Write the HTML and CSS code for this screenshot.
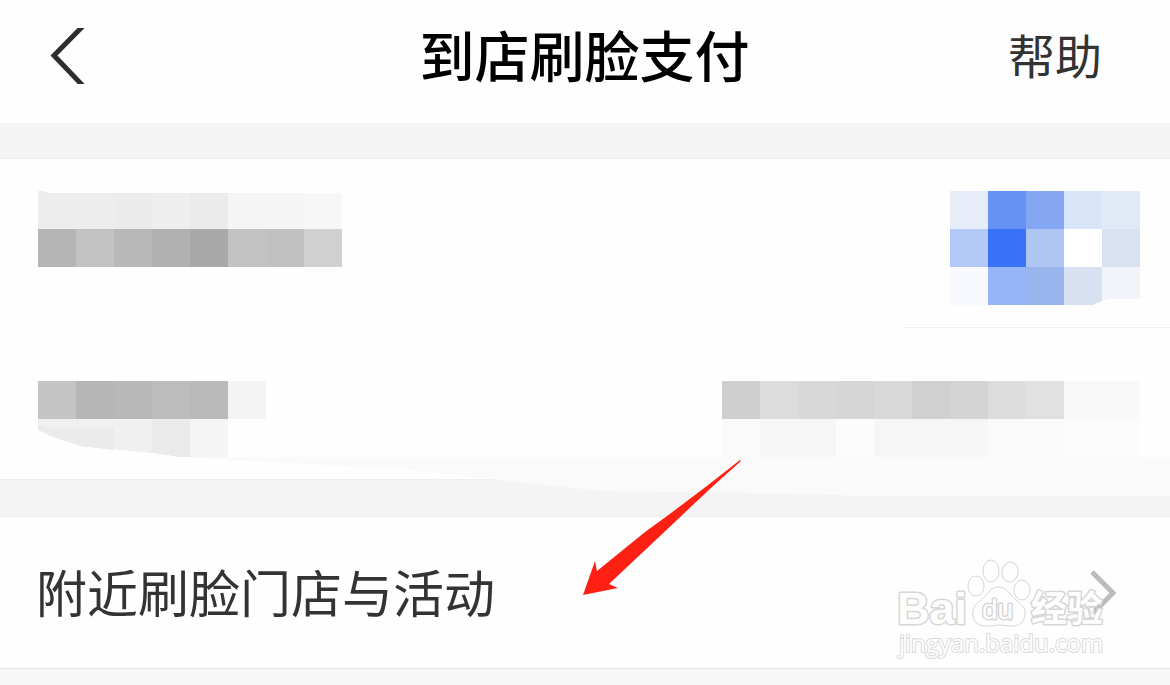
FILE: index.html
```html
<!DOCTYPE html>
<html lang="zh-CN">
<head>
<meta charset="utf-8">
<meta name="viewport" content="width=device-width, initial-scale=1">
<title>到店刷脸支付</title>
<link rel="stylesheet" href="styles.css">
</head>
<body>
<header class="nav">
  <button class="back" type="button" aria-label="返回">
    <svg width="36" height="56" viewBox="0 0 36 56"><path d="M36-4 5 27.500 36 60" fill="none" stroke="#2d2d30" stroke-width="5"/></svg>
  </button>
  <h1 class="title">到店刷脸支付</h1>
  <a class="help" href="#">帮助</a>
</header>
<div class="gap"></div>
<main>
  <section class="account">
    <div class="account-row">
      <svg class="mosaic" width="304" height="76" viewBox="0 0 304 76" shape-rendering="crispEdges">
        <path d="M0 0H5L12 2H76V38H0z" fill="#ededed"/>
        <path d="M76 2h38v36H76z" fill="#ebebeb"/><path d="M114 2h38v36h-38z" fill="#eee"/><path d="M152 2h38v36h-38z" fill="#ebebeb"/>
        <path d="M190 2h76v36h-76z" fill="#f5f5f5"/><path d="M266 2h38v36h-38z" fill="#f7f7f7"/>
        <path d="M0 38h38v38H0z" fill="#b5b5b5"/><path d="M38 38h38v38H38z" fill="#c3c3c3"/><path d="M76 38h38v38H76z" fill="#b8b8b8"/><path d="M114 38h38v38h-38z" fill="#b1b1b1"/><path d="M152 38h38v38h-38z" fill="#a9a9a9"/><path d="M190 38h38v38h-38z" fill="#c3c3c3"/><path d="M228 38h38v38h-38z" fill="#c1c1c1"/><path d="M266 38h38v38h-38z" fill="#d0d0d0"/>
      </svg>
      <svg class="mosaic" width="190" height="114" viewBox="0 0 190 114" shape-rendering="crispEdges">
        <path d="M0 0h38v38H0z" fill="#e6edf9"/><path d="M38 0h38v38H38z" fill="#6592f4"/><path d="M76 0h38v38H76z" fill="#85a7f3"/><path d="M114 0h38v38h-38z" fill="#d8e4f7"/><path d="M152 0h38v38h-38z" fill="#e3eaf7"/>
        <path d="M0 38h38v38H0z" fill="#b2c9f8"/><path d="M38 38h38v38H38z" fill="#3772f7"/><path d="M76 38h38v38H76z" fill="#afc6f3"/><path d="M114 38h38v38h-38z" fill="#fff"/><path d="M152 38h38v38h-38z" fill="#d9e2f3"/>
        <path d="M0 76h38v38H0z" fill="#f7f9fe"/><path d="M38 76h38v38H38z" fill="#96b4f7"/><path d="M76 76h38v38H76z" fill="#9ab5ee"/><path d="M114 76h38v34l-9 4h-29z" fill="#d7e1f1"/><path d="M152 76h38v32h-32l-6 3z" fill="#f2f4fa"/>
      </svg>
    </div>
    <div class="divider"></div>
    <div class="account-row account-row-low">
      <svg class="mosaic" width="228" height="76" viewBox="0 0 228 76" shape-rendering="crispEdges">
        <path d="M0 0h38v38H0z" fill="#c5c5c5"/><path d="M38 0h38v38H38z" fill="#b6b6b6"/><path d="M76 0h38v38H76z" fill="#b8b8b8"/><path d="M114 0h38v38h-38z" fill="#bdbdbd"/><path d="M152 0h38v38h-38z" fill="#bababa"/><path d="M190 0h38v38h-38z" fill="#f4f4f4"/>
        <path d="M0 38h114v34L42 65 10 54 0 49z" fill="#f0f0f0"/><path d="M0 44 10 47H76V69L42 65 10 54 0 49z" fill="#ebebeb"/><path d="M114 38h38v38h-10l-28-4z" fill="#eaeaea"/><path d="M152 38h38v38h-38z" fill="#f5f5f5"/>
      </svg>
      <svg class="mosaic" width="418" height="76" viewBox="0 0 418 76" shape-rendering="crispEdges">
        <path d="M0 0h38v38H0z" fill="#cfcfcf"/><path d="M38 0h38v38H38z" fill="#dcdcdc"/><path d="M76 0h38v38H76z" fill="#d8d8d8"/><path d="M114 0h38v38h-38z" fill="#d5d5d5"/><path d="M152 0h38v38h-38z" fill="#d9d9d9"/><path d="M190 0h38v38h-38z" fill="#d0d0d0"/><path d="M228 0h38v38h-38z" fill="#d4d4d4"/><path d="M266 0h38v38h-38z" fill="#dcdcdc"/><path d="M304 0h38v38h-38z" fill="#e1e1e1"/><path d="M342 0h76v38h-76z" fill="#f9f9f9"/>
        <path d="M0 38h342v38H0z" fill="#fafafa"/><path d="M38 38h76v38H38zM152 38h114v38H152z" fill="#f6f6f6"/><path d="M114 38h38v38h-38zM342 38h76v38h-76z" fill="#fcfcfc"/>
      </svg>
    </div>
    <svg class="smudge" viewBox="0 0 1170 39" preserveAspectRatio="none" aria-hidden="true"><path d="M180 0H1170V39H870L760 36 600 34 500 23 400 12 300 7z" fill="#fafafa"/></svg>
  </section>
  <div class="gap gap-mid"></div>
  <a class="entry" href="#">
    <span class="entry-label">附近刷脸门店与活动</span>
    <svg width="26" height="46" viewBox="0 0 26 46"><path d="M2 2 23 23 2 44" fill="none" stroke="#bcbcbc" stroke-width="5"/></svg>
  </a>
  <div class="gap gap-last"></div>
</main>
<svg class="arrow" width="160" height="138" viewBox="0 0 160 138" aria-hidden="true"><path d="M159 1Q114 37 64 73L16 112 14 102 2 136 37 129 28 125 95 62Q128 30 160 2z" fill="#ff2014"/></svg>
<svg class="watermark" width="220" height="110" viewBox="0 0 220 110" role="img" aria-label="Baidu 经验">
  <text class="wm-latin" x="7" y="69">Bai</text>
  <ellipse cx="86" cy="31" rx="8" ry="10"/><ellipse cx="101" cy="16" rx="8" ry="11"/><ellipse cx="120" cy="17" rx="8" ry="10" transform="rotate(10 120 17)"/><ellipse cx="132" cy="35" rx="8" ry="10"/>
  <path d="M108 32C100 32 97 41 90 46C84 50 82 55 83 61C84 69 90 71 97 71C102 71 105 70 109 70C113 70 116 71 121 71C129 71 134 68 135 60C136 53 131 49 126 45C120 40 117 32 108 32z"/>
  <text class="wm-du" x="92" y="64">du</text>
  <text class="wm-cjk" x="141" y="67">经验</text>
  <text class="wm-url" x="9" y="97">jingyan.baidu.com</text>
</svg>
</body>
</html>
```
FILE: styles.css
```css
* { box-sizing: border-box; }
body {
  margin: 0;
  position: relative;
  min-height: 100vh;
  overflow: hidden;
  background: #f6f6f6;
  color: #333;
  font-family: "Noto Sans CJK SC", sans-serif;
}
svg { display: block; flex: none; }
a { color: inherit; text-decoration: none; }
.nav {
  display: grid;
  grid-template-columns: 1fr auto 1fr;
  align-items: center;
  height: 123px;
  padding: 0 50px 11px 49px;
  background: #fefefe;
}
.back {
  justify-self: start;
  padding: 0;
  border: 0;
  background: none;
}
.title {
  margin: 0;
  padding-bottom: 6px;
  color: #000;
  font-size: 55px;
  font-weight: 500;
  line-height: 80px;
}
.help {
  justify-self: end;
  padding: 0 18px 4px 0;
  font-size: 47px;
  line-height: 80px;
}
.gap {
  height: 36px;
  background: #f4f4f4;
  border-bottom: 1px solid #ececec;
}
.gap-mid {
  height: 38px;
  border-top: 1px solid #eee;
}
.gap-last {
  height: 17px;
  border-top: 1px solid #e6e6e6;
  border-bottom: 0;
  background: #f6f6f6;
}
.account {
  position: relative;
  background: #fefefe;
}
.account-row {
  display: flex;
  justify-content: space-between;
  align-items: flex-start;
  padding: 32px 30px 22px 38px;
}
.account-row-low { padding-top: 53px; }
.divider {
  width: 266px;
  height: 1px;
  margin-left: auto;
  background: #f0f0f0;
}
.smudge {
  position: absolute;
  top: 298px;
  left: 0;
  width: 100%;
  height: 39px;
}
.entry {
  display: flex;
  justify-content: space-between;
  align-items: center;
  height: 151px;
  padding: 0 54px 0 36px;
  background: #fefefe;
  font-size: 51px;
  line-height: 76px;
}
.entry-label { padding-bottom: 4px; }
.arrow {
  position: absolute;
  top: 459px;
  left: 581px;
}
.watermark {
  position: absolute;
  top: 555px;
  right: 60px;
  fill: #fff;
  stroke: #c6c6c6;
  stroke-width: 1px;
  opacity: .7;
}
.watermark text {
  paint-order: stroke;
  stroke-width: 3px;
  stroke-linejoin: round;
}
.wm-latin { font: 700 45px "Liberation Sans", sans-serif; }
.wm-du { font: 400 28px "Liberation Sans", sans-serif; }
.wm-cjk { font: 700 36px "Noto Sans CJK SC", sans-serif; }
.watermark .wm-url {
  font: 400 24px "Open Sans", sans-serif;
  stroke: #ccc;
  stroke-width: 2px;
}
```
